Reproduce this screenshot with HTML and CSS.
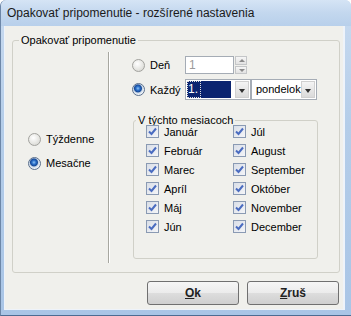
FILE: index.html
```html
<!DOCTYPE html>
<html lang="sk">
  <head>
    <meta charset="UTF-8" />
    <title>Opakovať pripomenutie - rozšírené nastavenia</title>
    <link rel="stylesheet" href="styles.css">
  </head>
  <body>
    <div class="window">
      <div class="titlebar">Opakovať pripomenutie - rozšírené nastavenia</div>
      <div class="client">
        <div class="group main-group">
          <div class="caption">Opakovať pripomenutie</div>
          <div class="group-body">
            <div class="type-pane">
              <label class="radio"><span class="dot"></span>Týždenne</label>
              <label class="radio checked"><span class="dot"></span>Mesačne</label>
            </div>
            <div class="sep"></div>
            <div class="detail-pane">
              <div class="row day-row">
                <label class="radio"><span class="dot"></span>Deň</label>
                <div class="textbox">1</div>
                <div class="spin">
                  <span class="spin-btn up"></span>
                  <span class="spin-btn down"></span>
                </div>
              </div>
              <div class="row every-row">
                <label class="radio checked"><span class="dot"></span>Každý</label>
                <div class="combo combo-num">
                  <span class="combo-text selected"><span class="focus">1.</span></span>
                  <span class="drop-btn"></span>
                </div>
                <div class="combo combo-day">
                  <span class="combo-text">pondelok</span>
                  <span class="drop-btn"></span>
                </div>
              </div>
              <div class="group months-group">
                <div class="caption">V týchto mesiacoch</div>
                <div class="month-grid">
                  <label class="check"><span class="box"><svg viewBox="0 0 9 9"><path d="M1 4.5 L3.5 7 L8 1.5" /></svg></span>Január</label>
                  <label class="check"><span class="box"><svg viewBox="0 0 9 9"><path d="M1 4.5 L3.5 7 L8 1.5" /></svg></span>Február</label>
                  <label class="check"><span class="box"><svg viewBox="0 0 9 9"><path d="M1 4.5 L3.5 7 L8 1.5" /></svg></span>Marec</label>
                  <label class="check"><span class="box"><svg viewBox="0 0 9 9"><path d="M1 4.5 L3.5 7 L8 1.5" /></svg></span>Apríl</label>
                  <label class="check"><span class="box"><svg viewBox="0 0 9 9"><path d="M1 4.5 L3.5 7 L8 1.5" /></svg></span>Máj</label>
                  <label class="check"><span class="box"><svg viewBox="0 0 9 9"><path d="M1 4.5 L3.5 7 L8 1.5" /></svg></span>Jún</label>
                  <label class="check"><span class="box"><svg viewBox="0 0 9 9"><path d="M1 4.5 L3.5 7 L8 1.5" /></svg></span>Júl</label>
                  <label class="check"><span class="box"><svg viewBox="0 0 9 9"><path d="M1 4.5 L3.5 7 L8 1.5" /></svg></span>August</label>
                  <label class="check"><span class="box"><svg viewBox="0 0 9 9"><path d="M1 4.5 L3.5 7 L8 1.5" /></svg></span>September</label>
                  <label class="check"><span class="box"><svg viewBox="0 0 9 9"><path d="M1 4.5 L3.5 7 L8 1.5" /></svg></span>Október</label>
                  <label class="check"><span class="box"><svg viewBox="0 0 9 9"><path d="M1 4.5 L3.5 7 L8 1.5" /></svg></span>November</label>
                  <label class="check"><span class="box"><svg viewBox="0 0 9 9"><path d="M1 4.5 L3.5 7 L8 1.5" /></svg></span>December</label>
                </div>
              </div>
            </div>
          </div>
        </div>
        <div class="buttons">
          <button class="btn"><u>O</u>k</button>
          <button class="btn"><u>Z</u>ruš</button>
        </div>
      </div>
    </div>
  </body>
</html>
```

FILE: styles.css
```css
html,
body {
  margin: 0;
  padding: 0;
}
body {
  width: 351px;
  height: 316px;
  overflow: hidden;
  font-family: "Liberation Sans", Arial, sans-serif;
  font-size: 11px;
  color: #000;
}
.window {
  width: 351px;
  height: 316px;
  box-sizing: border-box;
  display: flex;
  flex-direction: column;
  padding: 0 6px 5px 3px;
  background: linear-gradient(to bottom, #c9dbf0, #b4cde9 40%, #a9c5e6);
  border-left: 1px solid #6d87a8;
  border-bottom: 1px solid #4d6c92;
  border-radius: 6px 6px 0 0;
}
.titlebar {
  height: 26px;
  line-height: 26px;
  margin: 0 -6px 0 -3px;
  padding-left: 6px;
  font-size: 12px;
  color: #1a1a1a;
  background: linear-gradient(to bottom, #d5e4f5, #c3d7ee 50%, #b8d0eb);
  border-radius: 6px 6px 0 0;
  white-space: nowrap;
}
.client {
  flex: 1;
  display: flex;
  flex-direction: column;
  background: #f0f0ec;
  padding: 14px 3px 0 7px;
  border: 1px solid #eef3fa;
  border-top: none;
  border-right-width: 2px;
}

/* group boxes */
.group {
  border: 1px solid #d0d0c8;
  border-radius: 3px;
}
.caption {
  display: table;
  height: 13px;
  line-height: 13px;
  margin: -7px 0 -6px 6px;
  padding: 0 2px;
  background: #f0f0ec;
}
.months-group .caption {
  margin-left: 2px;
}
.group-body {
  display: flex;
  height: 231px;
}
.type-pane {
  width: 95px;
  padding-top: 88px;
  padding-left: 15px;
  box-sizing: border-box;
  display: flex;
  flex-direction: column;
  gap: 4px;
}
.sep {
  width: 1px;
  margin: 11px 0 9px;
  background: #a7a7a0;
  border-right: 1px solid #fff;
}
.detail-pane {
  flex: 1;
  padding: 15px 0 0 22px;
}

/* radio buttons */
.radio {
  display: flex;
  align-items: center;
  height: 20px;
  white-space: nowrap;
}
.dot {
  width: 11px;
  height: 11px;
  margin-right: 5px;
  border: 1px solid #a2a29e;
  border-radius: 50%;
  background: radial-gradient(circle at 40% 35%, #fff, #e4e4e0 60%, #cfcfca);
  flex: none;
}
.radio.checked .dot {
  border-color: #5a6f8c;
  background: radial-gradient(circle at 45% 40%, #8fc4f5 0, #2a6fc9 2px, #174a98 3.5px, #c8d6e6 4.5px, #eef2f7 6px);
}

/* text input rows */
.row {
  display: flex;
  align-items: center;
}
.row .radio {
  width: 53px;
}
.day-row {
  height: 18px;
}
.every-row {
  height: 21px;
  margin-top: 5px;
}
.textbox {
  width: 49px;
  height: 18px;
  box-sizing: border-box;
  border: 1px solid #a5acb5;
  background: #fff;
  color: #9a9a9a;
  padding: 0 3px;
  line-height: 16px;
  font-size: 12px;
}
.spin {
  width: 12px;
  height: 18px;
  margin-left: 1px;
  display: flex;
  flex-direction: column;
  gap: 1px;
}
.spin-btn {
  flex: 1;
  border: 1px solid #c4c6c8;
  background: linear-gradient(to bottom, #f6f6f6, #e2e2e2);
  position: relative;
}
.spin-btn::after {
  content: "";
  position: absolute;
  left: 3px;
  top: 2px;
  border-left: 3px solid transparent;
  border-right: 3px solid transparent;
}
.spin-btn.up::after {
  border-bottom: 3px solid #8a8a8a;
}
.spin-btn.down::after {
  border-top: 3px solid #8a8a8a;
}

/* combo boxes */
.combo {
  height: 21px;
  box-sizing: border-box;
  border: 1px solid #a5acb5;
  background: #fff;
  display: flex;
  align-items: stretch;
  padding: 1px;
}
.combo-num {
  width: 66px;
}
.combo-day {
  width: 66px;
}
.combo-text {
  flex: 1;
  line-height: 17px;
  font-size: 11px;
  padding-left: 3px;
}
.combo-text.selected {
  background: #0b2470;
  color: #fff;
  margin-right: 4px;
  padding-left: 1px;
  font-size: 12px;
}
.focus {
  display: inline-block;
  height: 15px;
  line-height: 15px;
  outline: 1px dotted #e0e0e0;
  padding-right: 2px;
}
.drop-btn {
  width: 12px;
  border: 1px solid #d0d0d0;
  background: linear-gradient(to bottom, #f4f4f4, #dadada);
  position: relative;
}
.drop-btn::after {
  content: "";
  position: absolute;
  left: 3px;
  top: 7px;
  border-left: 3px solid transparent;
  border-right: 3px solid transparent;
  border-top: 4px solid #303030;
}

/* months */
.months-group {
  width: 185px;
  height: 139px;
  box-sizing: border-box;
  margin: 20px 0 0 1px;
}
.month-grid {
  display: grid;
  grid-template-columns: 87px 1fr;
  grid-template-rows: repeat(6, 19px);
  grid-auto-flow: column;
  padding: 1px 0 0 12px;
}
.check {
  display: flex;
  align-items: center;
  white-space: nowrap;
  font-size: 11px;
}
.box {
  width: 11px;
  height: 11px;
  margin-right: 5px;
  border: 1px solid #8a9ab3;
  background: linear-gradient(to bottom right, #d9dee7, #f4f5f8);
  display: flex;
  align-items: center;
  justify-content: center;
  flex: none;
}
.box svg {
  width: 9px;
  height: 9px;
  fill: none;
  stroke: #4a6cc0;
  stroke-width: 2;
}

/* buttons */
.buttons {
  display: flex;
  justify-content: flex-end;
  gap: 8px;
  margin-top: 8px;
  padding-right: 1px;
}
.btn {
  width: 92px;
  height: 24px;
  font-family: "Liberation Sans", Arial, sans-serif;
  font-size: 12px;
  font-weight: bold;
  color: #222;
  border: 1px solid #707070;
  border-radius: 3px;
  background: linear-gradient(to bottom, #f6f6f6 0, #ebebeb 50%, #dddddd 51%, #cfcfcf 100%);
  padding: 0;
}
```
